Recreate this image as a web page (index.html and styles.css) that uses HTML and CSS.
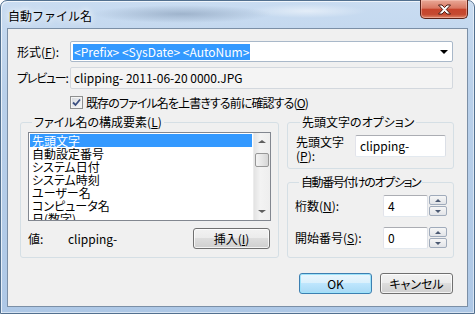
FILE: index.html
```html
<!DOCTYPE html>
<html lang="ja">
<head>
  <meta charset="UTF-8">
  <title>自動ファイル名</title>
  <link rel="stylesheet" href="styles.css">
</head>
<body>
  <div class="window">
    <div class="titlebar">
      <span class="title">自動ファイル名</span>
      <button class="close" title="閉じる">
        <svg width="15" height="11" viewBox="0 0 15 11"><path d="M1.5 1 H5 L7.5 3.6 L10 1 H13.5 L9.3 5.5 L13.5 10 H10 L7.5 7.4 L5 10 H1.5 L5.7 5.5 Z" fill="#fff" stroke="#4b1a12" stroke-width="1"/></svg>
      </button>
    </div>

    <div class="client">
      <div class="field-row">
        <label class="lbl">形式(<u>F</u>):</label>
        <div class="combo">
          <span class="sel">&lt;Prefix&gt; &lt;SysDate&gt; &lt;AutoNum&gt;</span>
          <span class="drop"></span>
        </div>
      </div>
      <div class="field-row preview-row">
        <label class="lbl tight">プレビュー:</label>
        <div class="preview">clipping- 2011-06-20 0000.JPG</div>
      </div>

      <div class="check-row">
        <span class="checkbox">
          <svg width="9" height="9" viewBox="0 0 9 9"><path d="M1 4.5 L3.5 7 L8 1.5" fill="none" stroke="#3b4f80" stroke-width="1.8"/></svg>
        </span>
        <span>既存のファイル名を上書きする前に確認する(<u>O</u>)</span>
      </div>

      <div class="groups">
        <fieldset class="group parts">
          <legend>ファイル名の構成要素(<u>L</u>)</legend>
          <div class="listbox">
            <ul class="items">
              <li class="selected">先頭文字</li>
              <li>自動設定番号</li>
              <li>システム日付</li>
              <li>システム時刻</li>
              <li>ユーザー名</li>
              <li>コンピュータ名</li>
              <li>日(数字)</li>
            </ul>
            <div class="vscroll">
              <span class="arr up"></span>
              <span class="thumb"></span>
              <span class="track"></span>
              <span class="arr down"></span>
            </div>
          </div>
          <div class="value-row">
            <span class="value-lbl">値:</span>
            <span class="value">clipping-</span>
            <button class="btn insert">挿入(<u>I</u>)</button>
          </div>
        </fieldset>

        <div class="right-col">
          <fieldset class="group prefix">
            <legend>先頭文字のオプション</legend>
            <div class="prefix-row">
              <label class="lbl2">先頭文字<br>(<u>P</u>):</label>
              <div class="textbox prefix-box">clipping-</div>
            </div>
          </fieldset>

          <fieldset class="group numbering">
            <legend>自動番号付けのオプション</legend>
            <div class="spin-row">
              <label class="lbl2">桁数(<u>N</u>):</label>
              <div class="spin">
                <div class="textbox num">4</div>
                <div class="spin-btns"><span class="sb up"></span><span class="sb down"></span></div>
              </div>
            </div>
            <div class="spin-row">
              <label class="lbl2">開始番号(<u>S</u>):</label>
              <div class="spin">
                <div class="textbox num">0</div>
                <div class="spin-btns"><span class="sb up"></span><span class="sb down"></span></div>
              </div>
            </div>
          </fieldset>
        </div>
      </div>

      <div class="buttons">
        <button class="btn default">OK</button>
        <button class="btn">キャンセル</button>
      </div>
    </div>
  </div>
</body>
</html>
```

FILE: styles.css
```css
* { box-sizing: border-box; }
body {
  margin: 0;
  font-family: "Noto Sans CJK JP", sans-serif;
  font-size: 12px;
  color: #000;
  background: #fff;
}
u { text-underline-offset: 1px; }

/* window frame */
.window {
  width: 475px; height: 314px;
  display: flex; flex-direction: column;
  border: 1px solid #52708f;
  border-radius: 7px 7px 0 0;
  padding: 0 6px 6px;
  background: linear-gradient(#c9dcf1, #b9d0ea 30%, #aec8e6);
  box-shadow: inset 1px 1px 0 rgba(255,255,255,.7), inset -1px -1px 0 rgba(255,255,255,.5);
}
.titlebar {
  height: 27px;
  display: flex; align-items: flex-start;
  background:
    radial-gradient(ellipse 90px 9px at 175px 13px, rgba(110,132,160,.45), transparent),
    radial-gradient(ellipse 60px 7px at 300px 10px, rgba(255,255,255,.5), transparent);
}
.title {
  margin: 7px 0 0 1px;
  font-size: 12px; line-height: 16px;
  text-shadow: 0 0 6px #fff, 0 0 10px #fff;
  flex: 1;
}
.close {
  width: 48px; height: 19px; margin: -1px 0 0;
  padding: 0;
  border: 1px solid #5a2219; border-top: none;
  border-radius: 0 0 5px 5px;
  background: linear-gradient(#e9a896, #d97863 45%, #c7442c 52%, #c54a31 80%, #e0876a);
  box-shadow: inset 0 0 0 1px rgba(255,210,200,.45);
  display: flex; align-items: center; justify-content: center;
}

/* client area */
.client {
  flex: 1;
  display: flex; flex-direction: column;
  background: #f0f0f0;
  border: 1px solid #7b8fa6;
  padding: 12px 14px 0 9px;
}
.field-row { display: flex; align-items: center; height: 21px; }
.preview-row { height: 22px; margin-top: 5px; }
.lbl {
  width: 53px; flex: none;
  white-space: nowrap;
  font-feature-settings: "palt"; line-height: 16px;
}
.lbl.tight { letter-spacing: -1.2px; }
.combo {
  width: 383px; height: 21px; flex: none;
  border: 1px solid #a9b8c9; border-radius: 2px;
  background: #fff;
  display: flex; align-items: center; justify-content: space-between;
  padding: 0 4px 0 2px;
}
.sel { background: #3399ff; color: #fff; line-height: 16px; padding: 0 1px; }
.drop {
  width: 0; height: 0;
  border-left: 4px solid transparent; border-right: 4px solid transparent;
  border-top: 4px solid #000;
}
.preview {
  width: 383px; height: 22px; flex: none;
  border: 1px solid #d3d8de; border-radius: 2px;
  background: #f4f4f4;
  padding: 0 3px; line-height: 20px;
}

.check-row {
  display: flex; align-items: center; gap: 3px;
  margin: 6px 0 0 53px; height: 14px;
  font-feature-settings: "palt";
  letter-spacing: -0.9px;
}
.checkbox {
  width: 13px; height: 13px;
  border: 1px solid #8e8f8f;
  background: linear-gradient(135deg, #d5d8dc, #fbfbfb);
  box-shadow: inset 0 0 0 1px #f4f4f4;
  display: flex; align-items: center; justify-content: center;
}

/* group boxes */
.groups { display: flex; gap: 8px; margin: 6px 0 0 3px; }
.group {
  margin: 0;
  border: 1px solid #d5dfe5; border-radius: 3px;
  font-feature-settings: "palt";
}
.group legend { padding: 0 2px; margin-left: 4px; line-height: 14px; }
.parts { width: 259px; height: 143px; padding: 3px 7px 7px; }
.right-col { display: flex; flex-direction: column; gap: 6px; }
.prefix { width: 167px; height: 54px; padding: 6px 6px 0 8px; }
.numbering { width: 167px; height: 83px; padding: 6px 6px 0 7px; }
.numbering legend { letter-spacing: -1.4px; }

/* list box */
.listbox {
  width: 243px; height: 89px;
  border: 1px solid #828790;
  background: #fff;
  display: flex; overflow: hidden;
}
.items { list-style: none; margin: 0; padding: 1px 1px 0; flex: 1; overflow: hidden; }
.items li { line-height: 13px; height: 13px; padding-left: 2px; white-space: nowrap; }
.items li.selected { background: #3399ff; color: #fff; }
.vscroll {
  width: 17px; display: flex; flex-direction: column;
  background: linear-gradient(90deg, #e3e3e3, #f3f3f3 40%, #eeeeee);
  border-left: 1px solid #ececec;
}
.arr { height: 17px; display: flex; align-items: center; justify-content: center; }
.arr::before {
  content: ""; width: 0; height: 0;
  border-left: 4px solid transparent; border-right: 4px solid transparent;
}
.arr.up::before { border-bottom: 3px solid #606060; }
.arr.down::before { border-top: 3px solid #606060; }
.thumb {
  height: 14px; margin: 3px 1px 0;
  border: 1px solid #979797; border-radius: 2px;
  background: linear-gradient(90deg, #f3f3f3, #e6e6e6 50%, #d6d6d6);
}
.track { flex: 1; }

.value-row { display: flex; align-items: center; margin-top: 7px; padding-right: 1px; }
.value-lbl { width: 40px; }
.value { flex: 1; }

/* buttons */
.btn {
  font: inherit;
  font-feature-settings: "palt";
  height: 21px; padding: 0;
  border: 1px solid #707070; border-radius: 3px;
  background: linear-gradient(#f2f2f2, #ebebeb 49%, #dddddd 50%, #cfcfcf);
  box-shadow: inset 0 0 0 1px rgba(255,255,255,.75);
  color: #000;
}
.insert { width: 77px; }
.buttons {
  display: flex; justify-content: flex-end; gap: 8px;
  margin-top: 15px;
}
.buttons .btn { width: 73px; }
.btn.default {
  border-color: #3c7fb1;
  background: linear-gradient(#eaf6fd, #d9f0fc 49%, #bee6fd 50%, #a7d9f5);
  box-shadow: inset 0 0 0 1px #9ee3fa;
}

/* right side controls */
.prefix-row { display: flex; align-items: flex-start; }
.lbl2 { width: 59px; line-height: 14px; }
.spin-row .lbl2 { width: 88px; }
.textbox {
  height: 22px;
  border: 1px solid #abadb3; border-radius: 2px;
  border-color: #abadb3 #dbdfe6 #e3e9ef #e2e3ea;
  background: #fff;
  padding: 0 4px; line-height: 20px;
}
.prefix-box { width: 91px; }
.spin-row { display: flex; align-items: center; height: 22px; margin-bottom: 10px; }
.spin { display: flex; gap: 1px; }
.num { width: 45px; }
.spin-btns { display: flex; flex-direction: column; gap: 1px; width: 18px; }
.sb {
  height: 10px;
  border: 1px solid #a0abbb; border-radius: 2px;
  background: linear-gradient(#f6f6f6, #e2e4e8);
  display: flex; align-items: center; justify-content: center;
}
.sb::before {
  content: ""; width: 0; height: 0;
  border-left: 3px solid transparent; border-right: 3px solid transparent;
}
.sb.up::before { border-bottom: 3px solid #4c5a73; }
.sb.down::before { border-top: 3px solid #4c5a73; }
```
